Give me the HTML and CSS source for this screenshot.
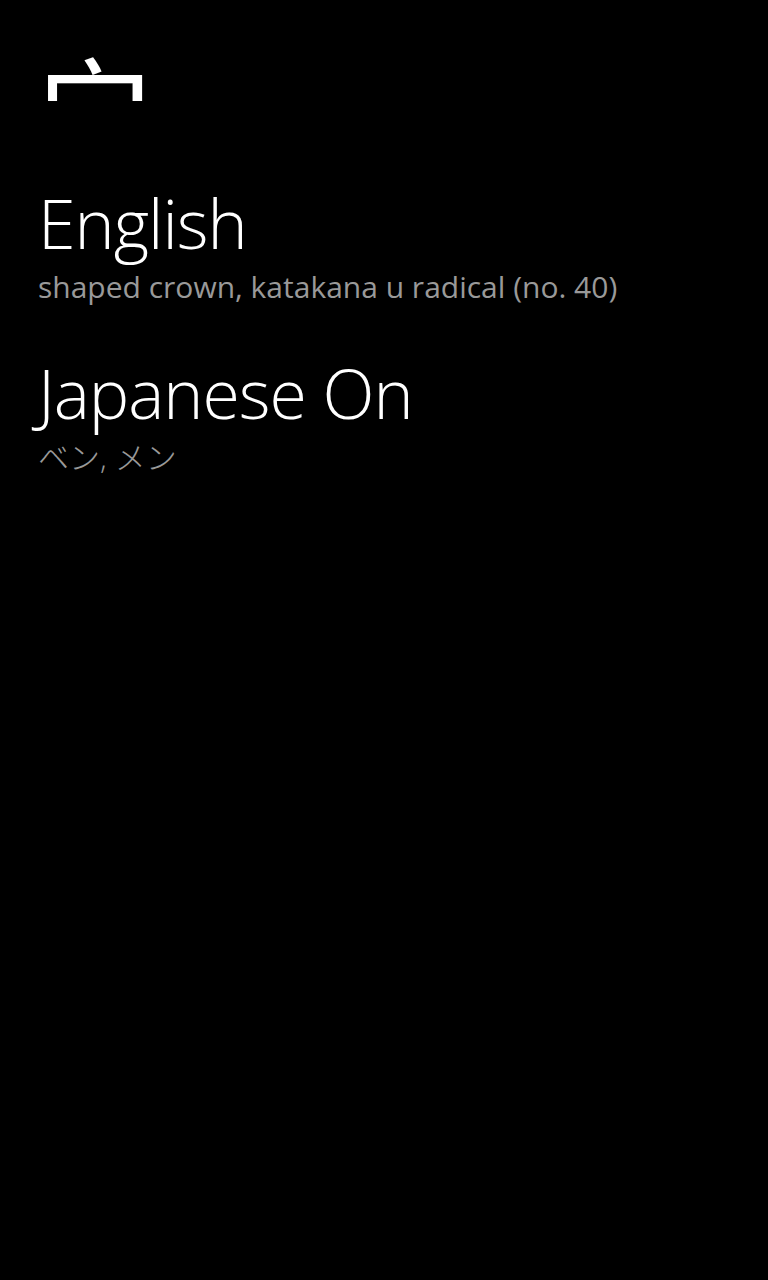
FILE: index.html
```html
<!DOCTYPE html>
<html>
<head>
<meta charset="utf-8">
<link rel="stylesheet" href="styles.css">
</head>
<body>
<div class="page">
  <div class="kanji">宀</div>
  <section class="entry">
    <h2 class="label">English</h2>
    <p class="value">shaped crown, katakana u radical (no. 40)</p>
  </section>
  <section class="entry">
    <h2 class="label">Japanese On</h2>
    <p class="value kana">ベン, メン</p>
  </section>
</div>
</body>
</html>
```
FILE: styles.css
```css
html, body {
  margin: 0;
  padding: 0;
  background: #000;
  width: 768px;
  height: 1280px;
  overflow: hidden;
}
.page {
  padding: 0 0 0 38px;
  color: #fff;
  font-family: "Open Sans", "Noto Sans CJK JP", sans-serif;
}
.kanji {
  font-family: "Noto Sans CJK SC", sans-serif;
  font-size: 114px;
  line-height: 99px;
  padding-top: 54px;
  margin-left: 0;
}
.entry {
  margin-top: 30px;
}
.entry + .entry {
  margin-top: 48px;
}
.label {
  margin: 0;
  font-weight: 300;
  font-size: 68px;
  line-height: 80px;
  letter-spacing: -1px;
}
.value {
  margin: 0;
  padding-top: 6px;
  color: #999;
  font-size: 30px;
  line-height: 36px;
}
.kana {
  font-size: 31px;
  font-weight: 300;
}
```
